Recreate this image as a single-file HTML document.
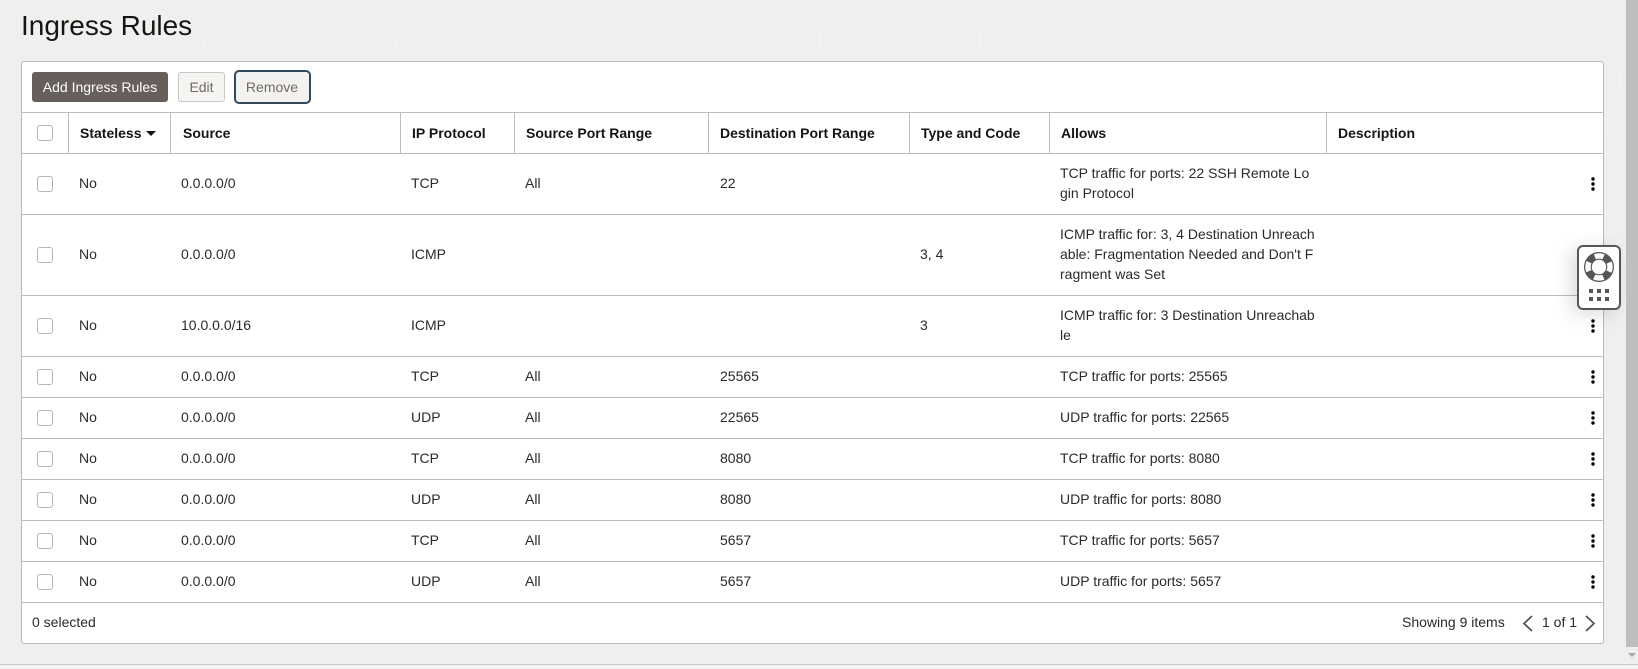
<!DOCTYPE html>
<html><head><meta charset="utf-8"><title>Ingress Rules</title>
<style>
html,body{margin:0;padding:0;width:1638px;height:669px;overflow:hidden;background:#f1efed;font-family:"Liberation Sans",Arial,sans-serif;color:#161513}
#bg{position:absolute;left:0;top:0}
h1{position:absolute;left:21px;top:9px;margin:0;font-size:28px;font-weight:400;line-height:34px;color:#161513}
.panel{position:absolute;left:21px;top:61px;width:1583px;height:583px;box-sizing:border-box;background:#fff;border:1px solid #bcbab6;border-radius:3px}
.btn{position:absolute;box-sizing:border-box;font-size:14px;text-align:center;border-radius:3px}
.add{left:32px;top:72px;width:136px;height:30px;line-height:30px;background:#665f5b;color:#fff}
.edit{left:178px;top:72px;width:47px;height:30px;line-height:28px;background:#f5f4f2;border:1px solid #c9c7c3;color:#6f6c68}
.rem{left:234px;top:70px;width:77px;height:34px;line-height:30px;background:#f3f2f0;border:2px solid #2f4a5c;color:#6f6c68;border-radius:5px;padding-right:1px}
table{position:absolute;left:21px;top:112px;width:1582px;table-layout:fixed;border-collapse:separate;border-spacing:0;font-size:14px}
th{box-sizing:border-box;height:42px;padding:0 0 0 11px;text-align:left;font-weight:700;font-size:14px;color:#161513;border-top:1px solid #bcbcbc;border-bottom:1px solid #bcbcbc;border-right:1px solid #bcbcbc;white-space:nowrap}
th:last-child{border-right:0}
th.s{padding-left:12px}
td{box-sizing:border-box;padding:0 0 2px 10px;line-height:20px;color:#2b2a28;border-bottom:1px solid #bcbcbc;white-space:nowrap;height:41px}
tr.r61 td{height:61px}
tr.r81 td{height:81px}
td.k{text-align:right;padding:0 8px 0 0}
td.k svg{display:block;margin-left:auto}
td.c,th.c{padding:0 0 0 16px}
td.d{padding-left:11px}
.cb{display:block;width:16px;height:16px;box-sizing:border-box;border:1px solid #b8b6b2;border-radius:3px;background:#fff}
.arrow{display:inline-block;width:0;height:0;border-left:5px solid transparent;border-right:5px solid transparent;border-top:5px solid #161513;margin-left:5px;vertical-align:2px}
.foot{position:absolute;font-size:14px;line-height:20px;color:#2b2a28;top:612px}
#sb{position:absolute;left:1626px;top:0;width:12px;height:647px;background:#bebebe}
#sba{position:absolute;left:1628px;top:653px;width:0;height:0;border-left:4px solid transparent;border-right:4px solid transparent;border-top:4px solid #a8a8a8}
#bot{position:absolute;left:0;top:664px;width:1638px;height:5px;background:#f5f4f2;border-top:1px solid #c8c8c6;box-sizing:border-box}
#w{position:absolute;left:1577px;top:245px;width:44px;height:65px;box-sizing:border-box;background:#fff;border:2px solid #565656;border-radius:6px;box-shadow:-6px 4px 18px rgba(0,0,0,.14)}
</style></head>
<body>
<svg id="bg" width="1638" height="660" fill="none" stroke="#f3f2f0" stroke-width="1.5">
<g><circle cx="300" cy="70" r="20"/><circle cx="300" cy="70" r="40"/><circle cx="300" cy="70" r="60"/><circle cx="300" cy="70" r="80"/><circle cx="300" cy="70" r="100"/></g>
<g><circle cx="1530" cy="80" r="30"/><circle cx="1530" cy="80" r="50"/><circle cx="1530" cy="80" r="70"/><circle cx="1530" cy="80" r="90"/></g>
<g><circle cx="900" cy="40" r="30"/><circle cx="900" cy="40" r="55"/><circle cx="900" cy="40" r="80"/></g>
</svg>
<h1>Ingress Rules</h1>
<div class="panel"></div>
<div class="btn add">Add Ingress Rules</div>
<div class="btn edit">Edit</div>
<div class="btn rem">Remove</div>
<table>
<colgroup><col style="width:48px"><col style="width:102px"><col style="width:230px"><col style="width:114px"><col style="width:194px"><col style="width:201px"><col style="width:140px"><col style="width:277px"><col style="width:276px"></colgroup>
<thead><tr><th class="c"><span class="cb"></span></th><th>Stateless<span class="arrow"></span></th><th class="s">Source</th><th>IP Protocol</th><th>Source Port Range</th><th>Destination Port Range</th><th>Type and Code</th><th>Allows</th><th>Description</th></tr></thead>
<tbody>
<tr class="r61"><td class="c"><span class="cb"></span></td><td>No</td><td>0.0.0.0/0</td><td>TCP</td><td>All</td><td class="d">22</td><td></td><td>TCP traffic for ports: 22 SSH Remote Lo<br>gin Protocol</td><td class="k"><svg width="4" height="14"><circle cx="2" cy="2" r="1.7"/><circle cx="2" cy="7" r="1.7"/><circle cx="2" cy="12" r="1.7"/></svg></td></tr>
<tr class="r81"><td class="c"><span class="cb"></span></td><td>No</td><td>0.0.0.0/0</td><td>ICMP</td><td></td><td></td><td>3, 4</td><td>ICMP traffic for: 3, 4 Destination Unreach<br>able: Fragmentation Needed and Don't F<br>ragment was Set</td><td class="k"></td></tr>
<tr class="r61"><td class="c"><span class="cb"></span></td><td>No</td><td>10.0.0.0/16</td><td>ICMP</td><td></td><td></td><td>3</td><td>ICMP traffic for: 3 Destination Unreachab<br>le</td><td class="k"><svg width="4" height="14"><circle cx="2" cy="2" r="1.7"/><circle cx="2" cy="7" r="1.7"/><circle cx="2" cy="12" r="1.7"/></svg></td></tr>
<tr><td class="c"><span class="cb"></span></td><td>No</td><td>0.0.0.0/0</td><td>TCP</td><td>All</td><td class="d">25565</td><td></td><td>TCP traffic for ports: 25565</td><td class="k"><svg width="4" height="14"><circle cx="2" cy="2" r="1.7"/><circle cx="2" cy="7" r="1.7"/><circle cx="2" cy="12" r="1.7"/></svg></td></tr>
<tr><td class="c"><span class="cb"></span></td><td>No</td><td>0.0.0.0/0</td><td>UDP</td><td>All</td><td class="d">22565</td><td></td><td>UDP traffic for ports: 22565</td><td class="k"><svg width="4" height="14"><circle cx="2" cy="2" r="1.7"/><circle cx="2" cy="7" r="1.7"/><circle cx="2" cy="12" r="1.7"/></svg></td></tr>
<tr><td class="c"><span class="cb"></span></td><td>No</td><td>0.0.0.0/0</td><td>TCP</td><td>All</td><td class="d">8080</td><td></td><td>TCP traffic for ports: 8080</td><td class="k"><svg width="4" height="14"><circle cx="2" cy="2" r="1.7"/><circle cx="2" cy="7" r="1.7"/><circle cx="2" cy="12" r="1.7"/></svg></td></tr>
<tr><td class="c"><span class="cb"></span></td><td>No</td><td>0.0.0.0/0</td><td>UDP</td><td>All</td><td class="d">8080</td><td></td><td>UDP traffic for ports: 8080</td><td class="k"><svg width="4" height="14"><circle cx="2" cy="2" r="1.7"/><circle cx="2" cy="7" r="1.7"/><circle cx="2" cy="12" r="1.7"/></svg></td></tr>
<tr><td class="c"><span class="cb"></span></td><td>No</td><td>0.0.0.0/0</td><td>TCP</td><td>All</td><td class="d">5657</td><td></td><td>TCP traffic for ports: 5657</td><td class="k"><svg width="4" height="14"><circle cx="2" cy="2" r="1.7"/><circle cx="2" cy="7" r="1.7"/><circle cx="2" cy="12" r="1.7"/></svg></td></tr>
<tr><td class="c"><span class="cb"></span></td><td>No</td><td>0.0.0.0/0</td><td>UDP</td><td>All</td><td class="d">5657</td><td></td><td>UDP traffic for ports: 5657</td><td class="k"><svg width="4" height="14"><circle cx="2" cy="2" r="1.7"/><circle cx="2" cy="7" r="1.7"/><circle cx="2" cy="12" r="1.7"/></svg></td></tr>
</tbody></table>
<div class="foot" style="left:32px">0 selected</div>
<div class="foot" style="left:1402px">Showing 9 items</div>
<svg style="position:absolute;left:1522px;top:615px" width="12" height="17" fill="none" stroke="#4a4a48" stroke-width="1.6"><path d="M10 1 L2 8.5 L10 16"/></svg>
<div class="foot" style="left:1542px">1 of 1</div>
<svg style="position:absolute;left:1584px;top:615px" width="12" height="17" fill="none" stroke="#4a4a48" stroke-width="1.6"><path d="M2 1 L10 8.5 L2 16"/></svg>
<div id="w">
<svg style="position:absolute;left:5px;top:5px" width="30" height="30" viewBox="0 0 30 30">
<circle cx="15" cy="15" r="15" fill="#565656"/>
<circle cx="15" cy="15" r="11" fill="none" stroke="#fff" stroke-width="5.5" stroke-dasharray="9.28 8" stroke-dashoffset="4.64" transform="rotate(-90 15 15)"/>
<circle cx="15" cy="15" r="8.2" fill="#565656"/>
<circle cx="15" cy="15" r="7.2" fill="#fff"/>
</svg>
<svg style="position:absolute;left:10px;top:42px" width="20" height="12" fill="#565656"><rect x="0" y="0" width="4" height="4"/><rect x="8" y="0" width="4" height="4"/><rect x="16" y="0" width="4" height="4"/><rect x="0" y="8" width="4" height="4"/><rect x="8" y="8" width="4" height="4"/><rect x="16" y="8" width="4" height="4"/></svg>
</div>
<div id="sb"></div><div id="sba"></div>
<div id="bot"></div>
</body></html>
